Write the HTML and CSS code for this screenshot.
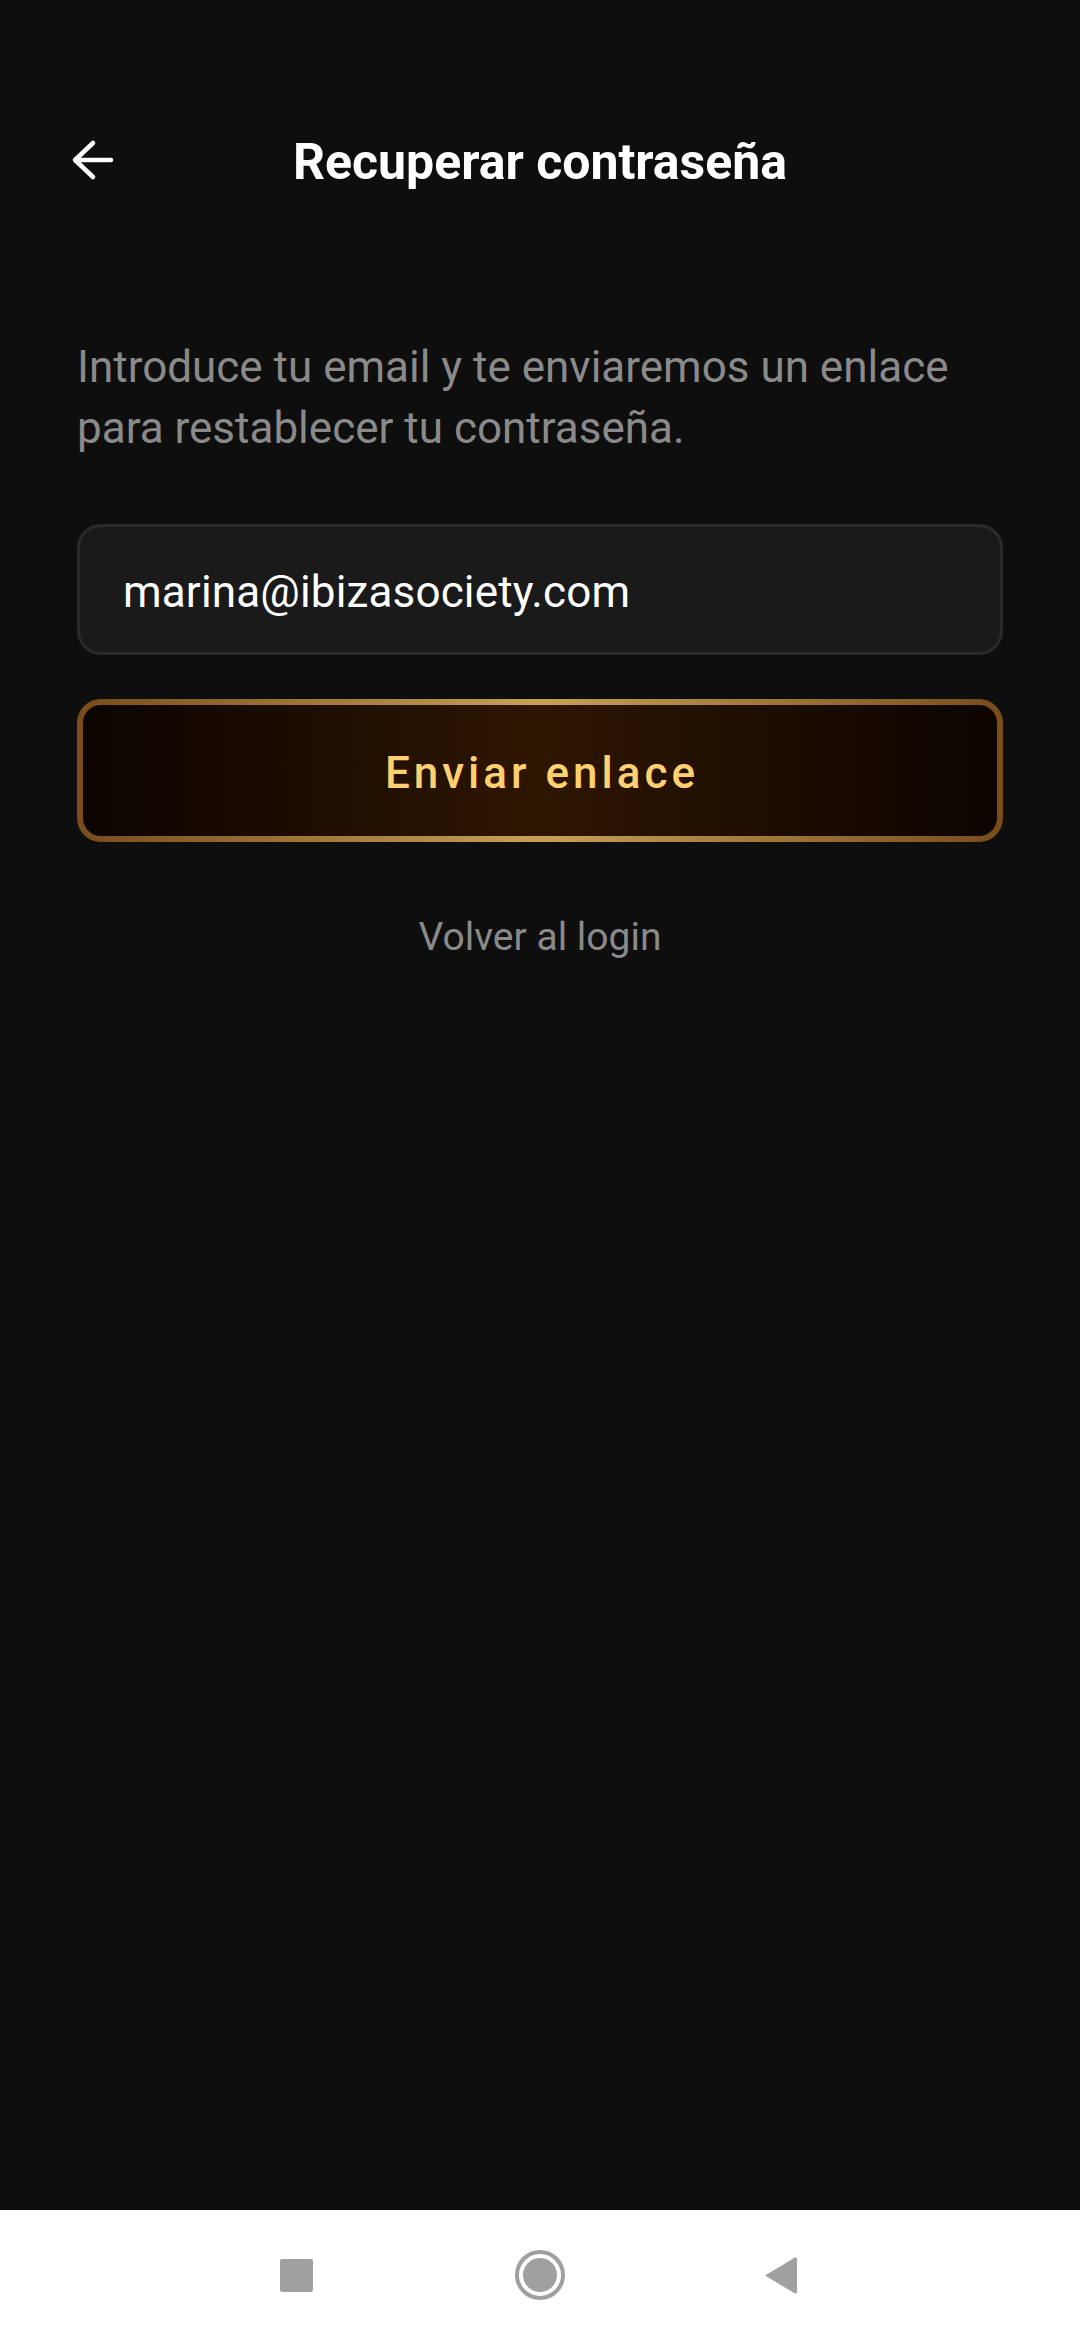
FILE: index.html
```html
<!DOCTYPE html>
<html lang="es">
<head>
    <meta charset="UTF-8">
    <title>Recuperar contraseña</title>
    <link rel="stylesheet" href="styles.css">
</head>
<body>
<div class="screen">
    <header class="top-bar">
        <svg class="back-icon" width="44" height="44" viewBox="0 0 44 44" fill="none">
            <path d="M4 22H40M22 5L4 22L22 39" stroke="#fff" stroke-width="4.5" stroke-linecap="round" stroke-linejoin="round"/>
        </svg>
        <h1 class="title">Recuperar contraseña</h1>
    </header>
    <main class="content">
        <p class="intro">Introduce tu email y te enviaremos un enlace para restablecer tu contraseña.</p>
        <div class="field">marina@ibizasociety.com</div>
        <div class="btn-send">Enviar enlace</div>
        <div class="back-login">Volver al login</div>
    </main>
</div>
<nav class="nav-bar">
    <svg width="33" height="33" viewBox="0 0 33 33"><rect width="33" height="33" rx="2" fill="#a0a0a0"/></svg>
    <svg class="nav-home" width="50" height="50" viewBox="0 0 50 50" fill="none">
        <circle cx="25" cy="25" r="23" stroke="#a0a0a0" stroke-width="4"/>
        <circle cx="25" cy="25" r="17" fill="#a0a0a0"/>
    </svg>
    <svg width="33" height="37" viewBox="0 0 33 37"><path d="M1 18.5L31 .5Q33 0 33 2V35Q33 37 31 36.500Z" fill="#a0a0a0"/></svg>
</nav>
</body>
</html>
```
FILE: styles.css
```css
* {
    box-sizing: border-box;
}

body {
    margin: 0;
    width: 1080px;
    height: 2340px;
    display: flex;
    flex-direction: column;
    background-color: #0e0e0e;
    font-family: Roboto, "Liberation Sans", sans-serif;
}

.screen {
    flex: 1;
    padding: 0 77px;
}

.top-bar {
    position: relative;
    height: 320px;
    padding-top: 131px;
}

.back-icon {
    position: absolute;
    left: -6px;
    top: 138px;
}

.title {
    margin: 0;
    font-size: 50px;
    line-height: 62px;
    font-weight: 700;
    color: #fff;
    text-align: center;
}

.intro {
    margin: 0 0 65px;
    padding-top: 17px;
    font-size: 44px;
    line-height: 61px;
    color: #8a8a8a;
}

.field {
    height: 131px;
    padding: 5px 43px 0;
    display: flex;
    align-items: center;
    font-size: 44px;
    letter-spacing: .15px;
    color: #fff;
    background-color: #1a1a1a;
    border: 3px solid #2a2a2a;
    border-radius: 24px;
}

.btn-send {
    margin-top: 44px;
    height: 143px;
    padding: 5px 0 0 4px;
    display: flex;
    align-items: center;
    justify-content: center;
    font-size: 44px;
    font-weight: 500;
    letter-spacing: 4px;
    color: #ffd070;
    border: 6px solid transparent;
    border-radius: 24px;
    background:
        linear-gradient(90deg, #0c0400, #2e1600 50%, #0c0400) padding-box,
        linear-gradient(90deg, #784c1b, #c8a055 50%, #784c1b) border-box;
}

.back-login {
    margin-top: 70px;
    text-align: center;
    font-size: 39px;
    line-height: 50px;
    color: #8a8a8a;
}

.nav-bar {
    height: 130px;
    padding-left: 280px;
    display: flex;
    align-items: center;
    gap: 199px;
    background-color: #fff;
}

.nav-home {
    margin-left: 3px;
}
```
